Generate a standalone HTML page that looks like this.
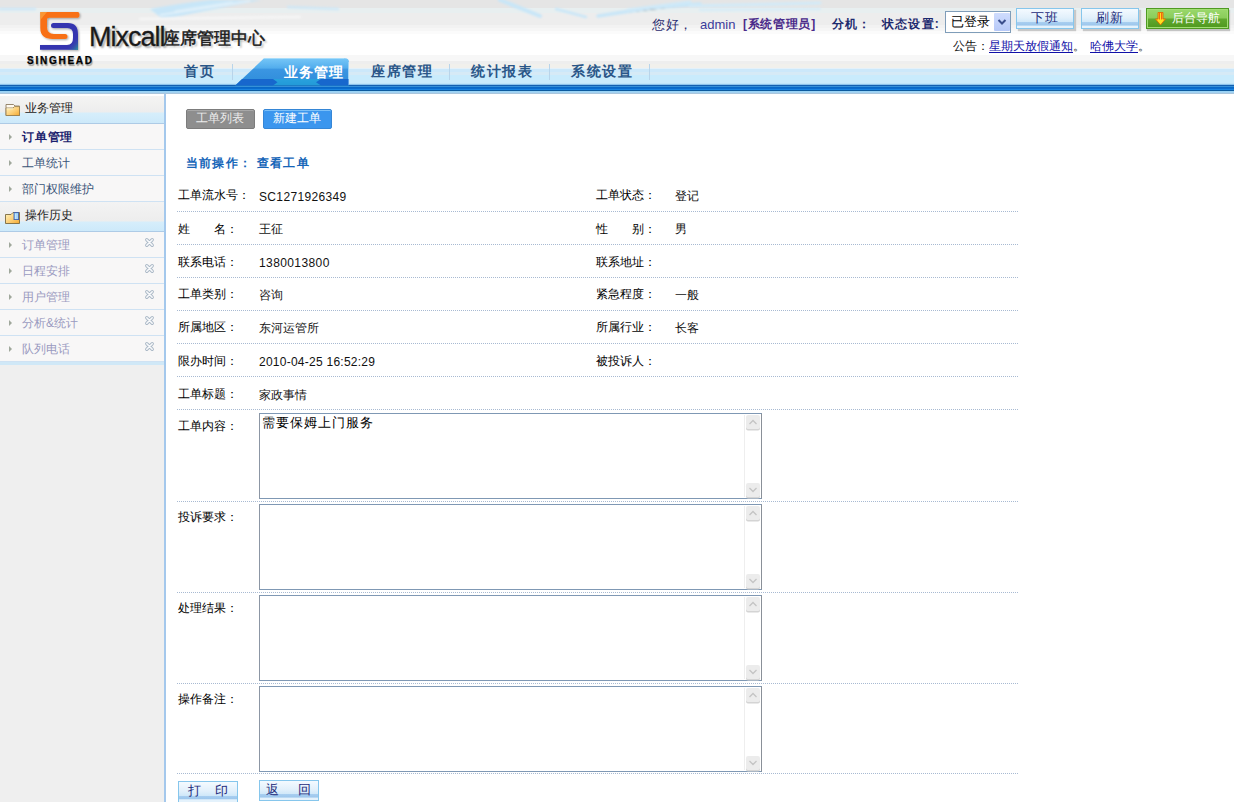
<!DOCTYPE html>
<html><head><meta charset="utf-8">
<style>
*{margin:0;padding:0;box-sizing:border-box}
html,body{width:1234px;height:802px;overflow:hidden;background:#fff;font-family:"Liberation Sans",sans-serif;font-size:12px;color:#000}
.a{position:absolute;white-space:nowrap;line-height:1}
#hdr{position:absolute;left:0;top:0;width:1234px;height:96px;background:linear-gradient(to bottom,#e5e5e5 0px,#e5e5e5 1px,#e5e5e5 1px,#e5e5e5 2px,#e5e5e5 2px,#e5e5e5 3px,#e5e5e5 3px,#e5e5e5 4px,#e5e5e5 4px,#e5e5e5 5px,#e5e5e5 5px,#e5e5e5 6px,#e5e5e5 6px,#e5e5e5 7px,#e5e5e5 7px,#e5e5e5 8px,#e8eff0 8px,#e8eff0 9px,#e8eff0 9px,#e8eff0 10px,#e8eff0 10px,#e8eff0 11px,#e8eff0 11px,#e8eff0 12px,#e8eff0 12px,#e8eff0 13px,#ededed 13px,#ededed 14px,#ededed 14px,#ededed 15px,#ededed 15px,#ededed 16px,#ededed 16px,#ededed 17px,#ededed 17px,#ededed 18px,#ededed 18px,#ededed 19px,#ededed 19px,#ededed 20px,#ededed 20px,#ededed 21px,#ededed 21px,#ededed 22px,#ededed 22px,#ededed 23px,#ededed 23px,#ededed 24px,#ededed 24px,#ededed 25px,#f2f2f2 25px,#f2f2f2 26px,#f2f2f2 26px,#f2f2f2 27px,#f2f2f2 27px,#f2f2f2 28px,#f6f6f6 28px,#f6f6f6 29px,#f6f6f6 29px,#f6f6f6 30px,#f6f6f6 30px,#f6f6f6 31px,#fbfbfb 31px,#fbfbfb 32px,#fbfbfb 32px,#fbfbfb 33px,#fbfbfb 33px,#fbfbfb 34px,#ffffff 34px,#ffffff 35px,#ffffff 35px,#ffffff 36px,#ffffff 36px,#ffffff 37px,#ffffff 37px,#ffffff 38px,#ffffff 38px,#ffffff 39px,#ffffff 39px,#ffffff 40px,#ffffff 40px,#ffffff 41px,#ffffff 41px,#ffffff 42px,#ffffff 42px,#ffffff 43px,#ffffff 43px,#ffffff 44px,#ffffff 44px,#ffffff 45px,#ffffff 45px,#ffffff 46px,#ffffff 46px,#ffffff 47px,#ffffff 47px,#ffffff 48px,#ffffff 48px,#ffffff 49px,#ffffff 49px,#ffffff 50px,#ffffff 50px,#ffffff 51px,#ffffff 51px,#ffffff 52px,#ffffff 52px,#ffffff 53px,#ffffff 53px,#ffffff 54px,#ffffff 54px,#ffffff 55px,#f7f7f7 55px,#f7f7f7 56px,#f7f7f7 56px,#f7f7f7 57px,#f7f7f7 57px,#f7f7f7 58px,#f7f7f7 58px,#f7f7f7 59px,#f7f7f7 59px,#f7f7f7 60px,#f7f7f7 60px,#f7f7f7 61px,#eeeeee 61px,#eeeeee 62px,#eeeeee 62px,#eeeeee 63px,#eeeeee 63px,#eeeeee 64px,#f1f0ec 64px,#f1f0ec 65px,#f1f0ec 65px,#f1f0ec 66px,#f1f0ec 66px,#f1f0ec 67px,#f1f0ec 67px,#f1f0ec 68px,#e4f1fa 68px,#e4f1fa 69px,#cce8fa 69px,#cce8fa 70px,#cce8fa 70px,#cce8fa 71px,#cce8fa 71px,#cce8fa 72px,#d6eaf6 72px,#d6eaf6 73px,#d6eaf6 73px,#d6eaf6 74px,#d6eaf6 74px,#d6eaf6 75px,#c9ebfc 75px,#c9ebfc 76px,#c9ebfc 76px,#c9ebfc 77px,#c9ebfc 77px,#c9ebfc 78px,#c9ebfc 78px,#c9ebfc 79px,#c9ebfc 79px,#c9ebfc 80px,#c9ebfc 80px,#c9ebfc 81px,#c9ebfc 81px,#c9ebfc 82px,#c9ebfc 82px,#c9ebfc 83px,#bfe4fa 83px,#bfe4fa 84px,#8cc4ec 84px,#8cc4ec 85px,#1560b0 85px,#1560b0 86px,#3590d8 86px,#3590d8 87px,#0868c8 87px,#0868c8 88px,#0a6ccc 88px,#0a6ccc 89px,#1a84e2 89px,#1a84e2 90px,#0c5a9e 90px,#0c5a9e 91px,#98d2f4 91px,#98d2f4 92px,#a2d0f0 92px,#a2d0f0 93px,#aac6dc 93px,#aac6dc 94px,#ffffff 94px,#ffffff 95px,#ffffff 95px,#ffffff 96px)}
#side{position:absolute;left:0;top:96px;width:164px;height:706px;background:#efefef}
#sideb{position:absolute;left:164px;top:94px;width:2px;height:708px;background:#a4c8ec}
.sh{position:absolute;left:0;width:164px;height:30px;background:linear-gradient(to bottom,#f3f3f3 0,#ededed 19px,#d6eefb 20px,#cde9fa 29px,#aecbe6 29px)}
.si{position:absolute;left:0;width:164px;height:26px;background:#f8f7f7;border-bottom:1px solid #cfe2f3}
.si .t{position:absolute;left:22px;top:7px;font-size:12px;line-height:12px;color:#3a5478}
.si .ar{position:absolute;left:9px;top:10px;width:0;height:0;border-top:3px solid transparent;border-bottom:3px solid transparent;border-left:3.5px solid #a0a89c}
.si .x{position:absolute;left:143.5px;top:5px;width:11px;height:11px}
.sh .t{position:absolute;left:25px;top:6px;font-size:12px;line-height:12px;color:#222}
.lbl{position:absolute;left:178px;font-size:12px;line-height:12px;color:#000}
.val{position:absolute;left:259px;font-size:12px;line-height:12px;color:#111}
.lbl2{position:absolute;left:596px;font-size:12px;line-height:12px;color:#000}
.val2{position:absolute;left:675px;font-size:12px;line-height:12px;color:#111}
.dot{position:absolute;left:177px;width:841px;height:1px;background-image:linear-gradient(to right,#a8bad2 50%,transparent 50%);background-size:2px 1px}
.ta{position:absolute;left:259px;width:503px;height:86px;border:1px solid #7f98b4;border-right-color:#8a9098;border-left-color:#8c96a4;background:#fff}
.ta .sb{position:absolute;right:1px;top:1px;width:16px;bottom:1px;border-left:1px solid #eee;background:#fff}
.ta .up,.ta .dn{position:absolute;left:1px;width:14px;height:14px;background:#ececec;border-radius:2px}
.ta .up{top:0;box-shadow:0 1.5px 0 #d4d4d4}.ta .dn{bottom:0;box-shadow:0 1.5px 0 #d4d4d4}
.btn{position:absolute;letter-spacing:1px;border:1px solid #86c6ec;background:linear-gradient(to bottom,#f4faff 0,#e2f0fb 45%,#d0e8f9 68%,#a8cef0 70%,#9cc6ec 86%,#e4f2fc 88%);color:#1c2a7a;font-size:13px;line-height:13px;text-align:center}
</style></head><body>
<div id="hdr"></div>

<!-- swooshes -->
<svg class="a" style="left:0;top:0" width="1234" height="60">
<defs><filter id="bl" x="-10%" y="-50%" width="120%" height="200%"><feGaussianBlur stdDeviation="1"/></filter></defs>
<g filter="url(#bl)" stroke-linecap="round">
<path d="M0 9 L35 9" stroke="#cde6f6" stroke-width="2.5"/>
<path d="M150 9 Q175 4 210 0 L262 0 Q220 8 190 14 Q170 18 160 17 Z" fill="#c8e6f8"/>
<path d="M160 15 L250 1" stroke="#f4f9fc" stroke-width="1"/>
<path d="M175 11 L232 2" stroke="#eef6fb" stroke-width=".8"/>
<path d="M140 19 L300 17" stroke="#f8f8f8" stroke-width="2"/>
<path d="M288 7 L338 9" stroke="#cfe7f6" stroke-width="2.5"/>
<path d="M500 0 L540 16" stroke="#c8e6f8" stroke-width="4"/>
<path d="M556 9 L586 17" stroke="#c8e6f8" stroke-width="2.5"/>
<path d="M598 16 L650 8 L700 4" stroke="#c8e6f8" stroke-width="3.5"/>
<path d="M628 10 L690 2" stroke="#cfe9f8" stroke-width="3"/>
<path d="M690 6 L820 3" stroke="#d2eaf8" stroke-width="3"/>
<path d="M700 10 L820 9" stroke="#d4ebf8" stroke-width="2"/>
</g>
</svg>
<!-- logo -->
<svg class="a" style="left:35px;top:8px" width="50" height="47" viewBox="0 0 50 47">
<defs><filter id="sh" x="-20%" y="-20%" width="150%" height="150%"><feGaussianBlur in="SourceAlpha" stdDeviation=".8"/><feOffset dx="1" dy="1.2"/><feComponentTransfer><feFuncA type="linear" slope=".35"/></feComponentTransfer><feMerge><feMergeNode/><feMergeNode in="SourceGraphic"/></feMerge></filter>
<linearGradient id="tl" x1="0" y1="0" x2="1" y2="1"><stop offset=".45" stop-color="#3434b0" stop-opacity="0"/><stop offset="1" stop-color="#2a9a9a"/></linearGradient></defs>
<g filter="url(#sh)">
<path d="M5.3 4 H43 Q44.5 4 44.5 6.8 Q44.5 9.7 43 9.7 H14 Q12 9.7 12 12 V19 Q12 26 19 26 H30 Q32.5 26 32.5 28.5 Q32.5 31 30 31 H18 Q5.3 31 5.3 20 Z" fill="#f86f12"/>
<path d="M5.3 4 H12 L5.3 12 Z" fill="#f9a040" opacity=".8"/>
<path d="M18.5 15 H33 Q43 15 43 26 V41.7 H5 V37 H32 Q38 37 38 30 V26 Q38 20 32 20 H18.5 Q16 20 16 17.5 Q16 15 18.5 15 Z" fill="#3636b0"/>
<path d="M43 28 V41.7 H31 Z" fill="url(#tl)"/>
</g>
</svg>
<div class="a" style="left:27px;top:56px;font-size:10px;font-weight:bold;letter-spacing:1.75px;color:#000;-webkit-text-stroke:.25px #000;text-shadow:1px 1.5px 1px rgba(0,0,0,.35)">SINGHEAD</div>
<div class="a" style="left:89px;top:24px;font-size:27px;letter-spacing:-1px;color:#1a1a1a;-webkit-text-stroke:.3px #1a1a1a;text-shadow:2px 2px 2px rgba(0,0,0,.35)">Mixcall</div>
<div class="a" style="left:163px;top:30px;font-size:17px;color:#1a1a1a;-webkit-text-stroke:.5px #1a1a1a;text-shadow:2px 2px 2px rgba(0,0,0,.3)">座席管理中心</div>
<!-- top right -->
<div class="a" style="left:652px;top:19px;font-size:12.5px;letter-spacing:.6px;color:#2b2b70">您好，</div>
<div class="a" style="left:700px;top:18px;font-size:13px;color:#3b3b9b">admin</div>
<div class="a" style="left:743px;top:18px;font-size:12px;font-weight:bold;letter-spacing:.7px;color:#4a2a8a">[系统管理员]</div>
<div class="a" style="left:832px;top:18px;font-size:12px;font-weight:bold;letter-spacing:.9px;color:#1e2a6e">分机：</div>
<div class="a" style="left:882px;top:18px;font-size:12px;font-weight:bold;letter-spacing:1.2px;color:#1e2a6e">状态设置:</div>
<div class="a" style="left:945px;top:11px;width:66px;height:22px;border:1px solid #7f9db9;background:#fff">
  <div class="a" style="left:5px;top:3px;font-size:13px;color:#000">已登录</div>
  <div class="a" style="left:48px;top:1px;width:16px;height:18px;background:linear-gradient(#cfdcfd,#b7c9f8);border-radius:1px">
    <svg width="16" height="18"><path d="M4.5 7 L8 10.5 L11.5 7" stroke="#3a4e8c" stroke-width="2" fill="none"/></svg>
  </div>
</div>
<div class="btn" style="left:1016px;top:8px;width:58px;height:21px;box-shadow:2px 2px 1px #c8c8c8;padding-top:2px">下班</div>
<div class="btn" style="left:1081px;top:8px;width:58px;height:21px;box-shadow:2px 2px 1px #c8c8c8;padding-top:2px">刷新</div>
<div class="a" style="left:1146px;top:8px;width:83px;height:21px;border:1px solid #4f9a22;box-shadow:inset 0 0 0 1px #a2de74,1px 2px 1px #c4c4c4;background:linear-gradient(#9ad86c 0,#8acc5a 48%,#60a82e 52%,#4f981e 100%)">
  <svg class="a" style="left:8px;top:3px" width="11" height="14" viewBox="0 0 11 14"><path d="M3 .5 H8 V7 H10.5 L5.5 13 L.5 7 H3 Z" fill="#ffe020" stroke="#e06a00" stroke-width=".9"/><path d="M4.3 1 V7.5 M6.7 1 V7.5" stroke="#f04a10" stroke-width="1"/></svg>
  <div class="a" style="left:25px;top:4px;font-size:11.5px;color:#fff">后台导航</div>
</div>
<div class="a" style="left:953px;top:40px;font-size:12px;color:#111">公告：</div>
<div class="a" style="left:989px;top:40px;font-size:12px;color:#1010a8;text-decoration:underline;text-underline-offset:2px">星期天放假通知</div>
<div class="a" style="left:1073px;top:40px;font-size:12px;color:#111">。</div>
<div class="a" style="left:1090px;top:40px;font-size:12px;color:#1010a8;text-decoration:underline;text-underline-offset:2px">哈佛大学</div>
<div class="a" style="left:1138px;top:40px;font-size:12px;color:#111">。</div>
<!-- nav -->
<svg class="a" style="left:234px;top:57px" width="118" height="30">
<defs><linearGradient id="tg" x1="0" y1="0" x2="0" y2="1"><stop offset="0" stop-color="#76c6f7"/><stop offset=".36" stop-color="#52aded"/><stop offset=".40" stop-color="#3b96e2"/><stop offset=".74" stop-color="#3390dd"/><stop offset=".78" stop-color="#28a0dc"/><stop offset="1" stop-color="#229ad8"/></linearGradient></defs>
<path d="M1.3 28.5 L30 1.3 H111 Q115 1.3 115 5.5 V28.5 Z" fill="url(#tg)"/>
<path d="M30 1.5 H110" stroke="#a6dcfa" stroke-width="1"/>
<path d="M114.5 5 V28" stroke="#9fd4f6" stroke-width="1"/>
<path d="M1.3 28.5 L8 22 H39 L43.5 25.3 L39 28.5 Z" fill="#1767cd"/>
<path d="M114.5 22 H87 L82 25.3 L87 28.5 H114.5 Z" fill="#1767cd"/>
</svg>
<div class="a" style="left:184px;top:64px;font-size:14px;font-weight:bold;letter-spacing:1.5px;color:#2a5688">首页</div>
<div class="a" style="left:232px;top:64px;width:1px;height:16px;background:#b8d4ea"></div>
<div class="a" style="left:284px;top:65px;font-size:14px;font-weight:bold;letter-spacing:1px;color:#fff">业务管理</div>
<div class="a" style="left:371px;top:64px;font-size:14px;font-weight:bold;letter-spacing:1.5px;color:#2a5688">座席管理</div>
<div class="a" style="left:449px;top:64px;width:1px;height:16px;background:#b8d4ea"></div>
<div class="a" style="left:471px;top:64px;font-size:14px;font-weight:bold;letter-spacing:1.5px;color:#2a5688">统计报表</div>
<div class="a" style="left:549px;top:64px;width:1px;height:16px;background:#b8d4ea"></div>
<div class="a" style="left:571px;top:64px;font-size:14px;font-weight:bold;letter-spacing:1.5px;color:#2a5688">系统设置</div>
<div class="a" style="left:649px;top:64px;width:1px;height:16px;background:#b8d4ea"></div>

<div id="side"></div>

<div class="sh" style="top:96px;height:28px;background:linear-gradient(to bottom,#f4f4f3 0,#ededed 16px,#d6eefb 17px,#cde9fa 27px,#aecbe6 27px)"><svg class="a" style="left:5px;top:8px" width="16" height="13" viewBox="0 0 16 13"><defs><linearGradient id="fg" x1="0" y1="0" x2="1" y2="1"><stop offset="0" stop-color="#fff6c0"/><stop offset=".55" stop-color="#fccf78"/><stop offset="1" stop-color="#f5aa30"/></linearGradient></defs><path d="M1 .5 H8.5 L10 2 H14.5 V11.5 H1 Z" fill="#fffaf0" stroke="#8c7c60" stroke-width=".9"/><path d="M1 4 H8 L9.5 2.6 H14.5 V11.5 H1 Z" fill="url(#fg)" stroke="#9a8050" stroke-width=".9"/><path d="M1.6 4.8 H8.2" stroke="#fffce0" stroke-width=".8"/></svg><div class="t" style="top:6px">业务管理</div></div>
<div class="si" style="top:124px"><div class="ar"></div><div class="t" style="font-weight:bold;letter-spacing:.8px;color:#1c1f6e">订单管理</div></div>
<div class="si" style="top:150px"><div class="ar"></div><div class="t">工单统计</div></div>
<div class="si" style="top:176px"><div class="ar"></div><div class="t">部门权限维护</div></div>
<div class="sh" style="top:202px"><svg class="a" style="left:5px;top:10px" width="16" height="13" viewBox="0 0 16 13"><path d="M.5 2.5 H6 L8 .5 H14.5 V11.5 H.5 Z" fill="url(#fg)" stroke="#7a6a40" stroke-width=".9"/><rect x="9" y=".6" width="4.6" height="7" fill="#86c6f4" stroke="#3a5ab0" stroke-width=".8"/><path d="M10.6 1.5 V7 M12 1.5 V7" stroke="#eaf6ff" stroke-width=".7"/></svg><div class="t" style="top:7px">操作历史</div></div>
<div class="si" style="top:232px"><div class="ar"></div><div class="t" style="color:#9a9ac0">订单管理</div><svg class="x" width="11" height="11" viewBox="0 0 11 11"><path d="M2.8 2.8 L8.2 8.2 M8.2 2.8 L2.8 8.2" stroke="#aab8c6" stroke-width="3.4" stroke-linecap="round"/><path d="M2.8 2.8 L8.2 8.2 M8.2 2.8 L2.8 8.2" stroke="#f8f9fb" stroke-width="1.6" stroke-linecap="round"/></svg></div>
<div class="si" style="top:258px"><div class="ar"></div><div class="t" style="color:#9a9ac0">日程安排</div><svg class="x" width="11" height="11" viewBox="0 0 11 11"><path d="M2.8 2.8 L8.2 8.2 M8.2 2.8 L2.8 8.2" stroke="#aab8c6" stroke-width="3.4" stroke-linecap="round"/><path d="M2.8 2.8 L8.2 8.2 M8.2 2.8 L2.8 8.2" stroke="#f8f9fb" stroke-width="1.6" stroke-linecap="round"/></svg></div>
<div class="si" style="top:284px"><div class="ar"></div><div class="t" style="color:#9a9ac0">用户管理</div><svg class="x" width="11" height="11" viewBox="0 0 11 11"><path d="M2.8 2.8 L8.2 8.2 M8.2 2.8 L2.8 8.2" stroke="#aab8c6" stroke-width="3.4" stroke-linecap="round"/><path d="M2.8 2.8 L8.2 8.2 M8.2 2.8 L2.8 8.2" stroke="#f8f9fb" stroke-width="1.6" stroke-linecap="round"/></svg></div>
<div class="si" style="top:310px"><div class="ar"></div><div class="t" style="color:#9a9ac0">分析&amp;统计</div><svg class="x" width="11" height="11" viewBox="0 0 11 11"><path d="M2.8 2.8 L8.2 8.2 M8.2 2.8 L2.8 8.2" stroke="#aab8c6" stroke-width="3.4" stroke-linecap="round"/><path d="M2.8 2.8 L8.2 8.2 M8.2 2.8 L2.8 8.2" stroke="#f8f9fb" stroke-width="1.6" stroke-linecap="round"/></svg></div>
<div class="si" style="top:336px"><div class="ar"></div><div class="t" style="color:#9a9ac0">队列电话</div><svg class="x" width="11" height="11" viewBox="0 0 11 11"><path d="M2.8 2.8 L8.2 8.2 M8.2 2.8 L2.8 8.2" stroke="#aab8c6" stroke-width="3.4" stroke-linecap="round"/><path d="M2.8 2.8 L8.2 8.2 M8.2 2.8 L2.8 8.2" stroke="#f8f9fb" stroke-width="1.6" stroke-linecap="round"/></svg></div>
<div class="a" style="left:0;top:362px;width:164px;height:3px;background:#d0e8f7"></div>
<div id="sideb"></div>

<div class="a" style="left:186px;top:109px;width:69px;height:20px;background:#8e8e8e;border:1px solid #7c7c7c;border-radius:2px;box-shadow:inset 0 1px 0 #a8a8a8"><div class="a" style="left:9px;top:2px;font-size:12px;color:#ececec">工单列表</div></div>
<div class="a" style="left:263px;top:109px;width:69px;height:20px;background:#3b96ee;border:1px solid #3586d6;border-radius:2px;box-shadow:inset 0 1px 0 #7cc0f8"><div class="a" style="left:9px;top:2px;font-size:12px;color:#fff">新建工单</div></div>
<div class="a" style="left:186px;top:157px;font-size:12px;font-weight:bold;letter-spacing:1.2px;color:#1565b8">当前操作：</div>
<div class="a" style="left:257px;top:157px;font-size:12px;font-weight:bold;letter-spacing:1.2px;color:#1565b8">查看工单</div>

<div class="lbl" style="top:189px">工单流水号：</div><div class="val" style="top:191px;letter-spacing:.35px">SC1271926349</div>
<div class="lbl2" style="top:189px">工单状态：</div><div class="val2" style="top:190px">登记</div>
<div class="dot" style="top:211px"></div>
<div class="lbl" style="top:223px">姓</div><div class="lbl" style="top:223px;left:214px">名：</div><div class="val" style="top:223px">王征</div>
<div class="lbl2" style="top:223px">性</div><div class="lbl2" style="top:223px;left:632px">别：</div><div class="val2" style="top:223px">男</div>
<div class="dot" style="top:244px"></div>
<div class="lbl" style="top:256px">联系电话：</div><div class="val" style="top:257px;letter-spacing:.4px">1380013800</div>
<div class="lbl2" style="top:256px">联系地址：</div>
<div class="dot" style="top:277px"></div>
<div class="lbl" style="top:288px">工单类别：</div><div class="val" style="top:289px">咨询</div>
<div class="lbl2" style="top:288px">紧急程度：</div><div class="val2" style="top:289px">一般</div>
<div class="dot" style="top:310px"></div>
<div class="lbl" style="top:321px">所属地区：</div><div class="val" style="top:322px">东河运管所</div>
<div class="lbl2" style="top:321px">所属行业：</div><div class="val2" style="top:322px">长客</div>
<div class="dot" style="top:343px"></div>
<div class="lbl" style="top:355px">限办时间：</div><div class="val" style="top:356px;letter-spacing:.25px">2010-04-25 16:52:29</div>
<div class="lbl2" style="top:355px">被投诉人：</div>
<div class="dot" style="top:376px"></div>
<div class="lbl" style="top:388px">工单标题：</div><div class="val" style="top:389px">家政事情</div>
<div class="dot" style="top:409px"></div>
<div class="lbl" style="top:420px">工单内容：</div>
<div class="ta" style="top:413px"><div class="a" style="left:2px;top:2px;font-size:13px;letter-spacing:1px;color:#000">需要保姆上门服务</div><div class="sb"><div class="up"><svg width="14" height="14"><path d="M3.5 9 L7 5.5 L10.5 9" stroke="#c4c4c4" stroke-width="1.3" fill="none"/></svg></div><div class="dn"><svg width="14" height="14"><path d="M3.5 5 L7 8.5 L10.5 5" stroke="#c4c4c4" stroke-width="1.3" fill="none"/></svg></div></div></div>
<div class="dot" style="top:501px"></div>
<div class="lbl" style="top:511px">投诉要求：</div>
<div class="ta" style="top:504px"><div class="sb"><div class="up"><svg width="14" height="14"><path d="M3.5 9 L7 5.5 L10.5 9" stroke="#c4c4c4" stroke-width="1.3" fill="none"/></svg></div><div class="dn"><svg width="14" height="14"><path d="M3.5 5 L7 8.5 L10.5 5" stroke="#c4c4c4" stroke-width="1.3" fill="none"/></svg></div></div></div>
<div class="dot" style="top:592px"></div>
<div class="lbl" style="top:602px">处理结果：</div>
<div class="ta" style="top:595px"><div class="sb"><div class="up"><svg width="14" height="14"><path d="M3.5 9 L7 5.5 L10.5 9" stroke="#c4c4c4" stroke-width="1.3" fill="none"/></svg></div><div class="dn"><svg width="14" height="14"><path d="M3.5 5 L7 8.5 L10.5 5" stroke="#c4c4c4" stroke-width="1.3" fill="none"/></svg></div></div></div>
<div class="dot" style="top:683px"></div>
<div class="lbl" style="top:693px">操作备注：</div>
<div class="ta" style="top:686px"><div class="sb"><div class="up"><svg width="14" height="14"><path d="M3.5 9 L7 5.5 L10.5 9" stroke="#c4c4c4" stroke-width="1.3" fill="none"/></svg></div><div class="dn"><svg width="14" height="14"><path d="M3.5 5 L7 8.5 L10.5 5" stroke="#c4c4c4" stroke-width="1.3" fill="none"/></svg></div></div></div>
<div class="dot" style="top:773px"></div>
<div class="btn" style="left:178px;top:781px;width:60px;height:22px;padding-top:2px;letter-spacing:0">打&nbsp;&nbsp;&nbsp;&nbsp;印</div>
<div class="btn" style="left:259px;top:780px;width:60px;height:21px;padding-top:2px">返&nbsp;&nbsp;&nbsp;&nbsp;回</div>

</body></html>
